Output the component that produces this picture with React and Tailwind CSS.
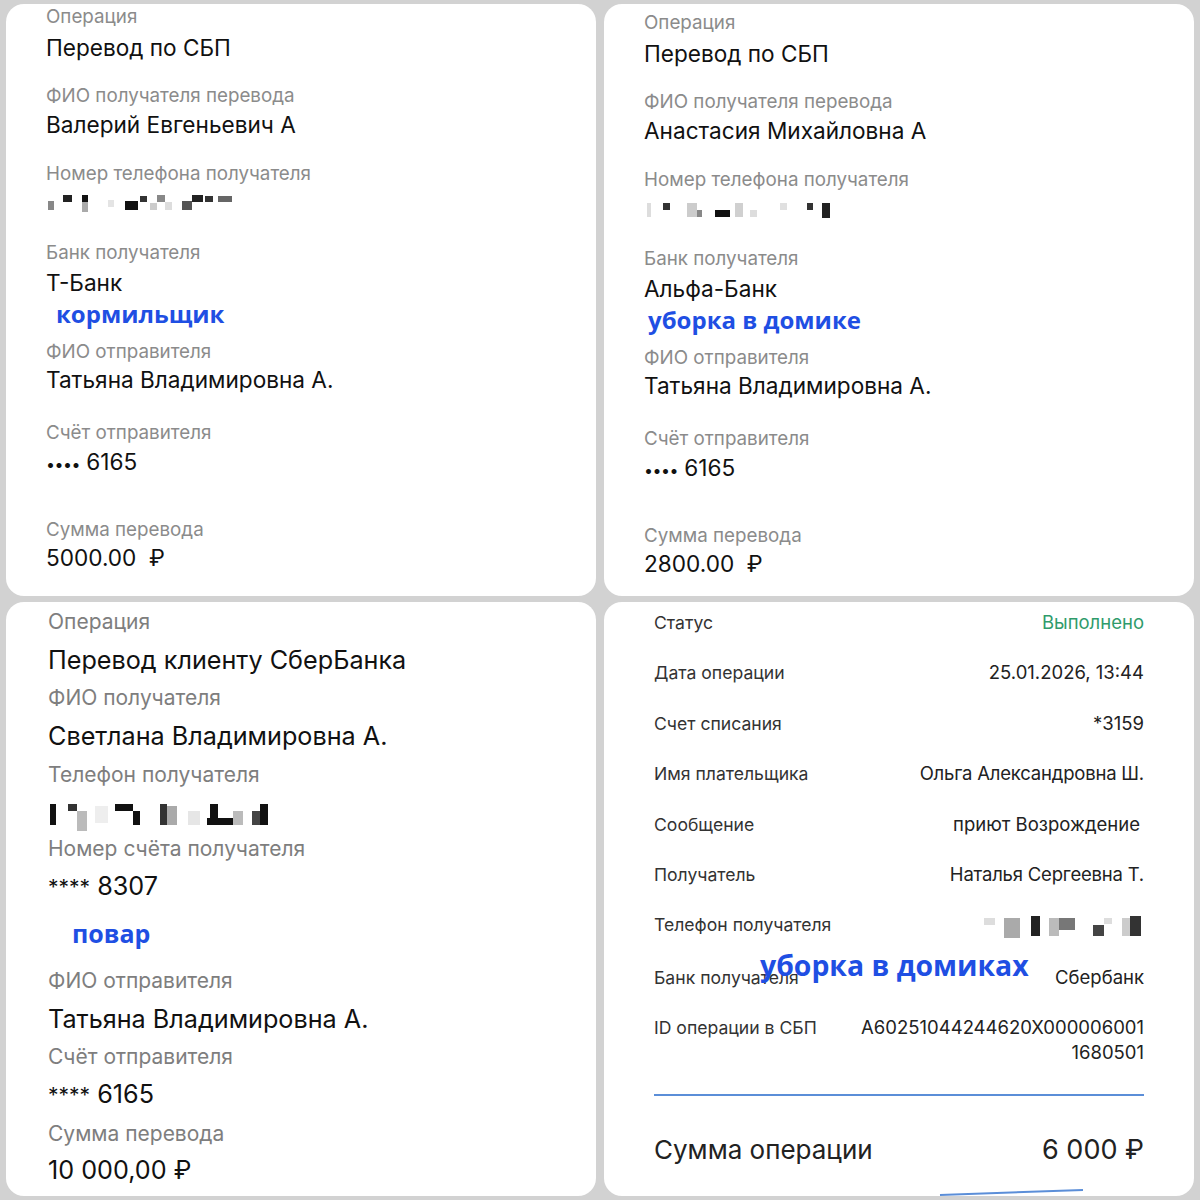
// Коллаж из четырёх чеков о переводах.
const Pix = ({ box, cells }) => {
  const [x0, y0, w, h] = box
  return (
    <svg width={w} height={h} viewBox={`${x0} ${y0} ${w} ${h}`} className="block">
      {cells.map(([x1, y1, x2, y2, c], i) => (
        <rect key={i} x={x1} y={y1} width={x2 - x1} height={y2 - y1} fill={c} />
      ))}
    </svg>
  )
}

const Note = ({ children, className = '' }) => (
  <div
    className={`font-bold text-[#1f4fe3] ${className}`}
    style={{ fontFamily: '"Open Sans", "Noto Sans", sans-serif' }}
  >
    {children}
  </div>
)

const pixA = [
  [48, 197, 54, 206, '#888'],
  [63, 191, 72, 198, '#222'],
  [82, 191, 88, 198, '#111'],
  [82, 198, 88, 208, '#aaa'],
  [108, 196, 114, 203, '#e4e4e4'],
  [125, 197, 138, 206, '#111'],
  [140, 192, 147, 198, '#333'],
  [150, 199, 157, 206, '#ccc'],
  [157, 191, 165, 198, '#888'],
  [165, 198, 172, 206, '#ddd'],
  [182, 197, 192, 206, '#555'],
  [192, 191, 203, 198, '#222'],
  [205, 192, 213, 198, '#333'],
  [218, 192, 232, 198, '#666'],
]

const pixB = [
  [647, 200, 651, 214, '#ddd'],
  [663, 200, 670, 207, '#333'],
  [687, 200, 697, 214, '#ccc'],
  [697, 207, 702, 214, '#888'],
  [715, 207, 730, 214, '#111'],
  [735, 200, 743, 214, '#d0d0d0'],
  [750, 207, 757, 214, '#ddd'],
  [780, 200, 787, 207, '#e0e0e0'],
  [807, 200, 813, 207, '#333'],
  [822, 200, 830, 215, '#222'],
]

const pixC = [
  [50, 803, 56, 824, '#111'],
  [68, 803, 77, 810, '#333'],
  [77, 810, 87, 830, '#bbb'],
  [95, 805, 108, 822, '#eee'],
  [115, 803, 133, 810, '#111'],
  [133, 810, 140, 824, '#111'],
  [160, 803, 167, 824, '#333'],
  [167, 805, 177, 824, '#aaa'],
  [188, 810, 200, 824, '#e6e6e6'],
  [207, 817, 233, 824, '#111'],
  [210, 803, 218, 817, '#111'],
  [233, 810, 243, 824, '#bbb'],
  [252, 810, 260, 824, '#444'],
  [260, 803, 268, 824, '#111'],
]

const pixD = [
  [984, 918, 995, 925, '#ddd'],
  [1004, 918, 1020, 938, '#aaa'],
  [1031, 916, 1040, 936, '#222'],
  [1049, 918, 1059, 936, '#bbb'],
  [1059, 918, 1075, 930, '#777'],
  [1093, 925, 1104, 936, '#444'],
  [1104, 918, 1112, 924, '#ddd'],
  [1122, 918, 1130, 936, '#ccc'],
  [1130, 916, 1141, 936, '#333'],
]

// Карточка СБП (верхний ряд)
function SbpCard({ pt, noteShift, name, bank, note, sum, pix, pixBox }) {
  const lbl = 'text-[18.8px] leading-[22px] text-[#8b8b8b]'
  const val = 'text-[22.6px] leading-[28px] text-[#111]'
  return (
    <div
      className={`rounded-[18px] bg-white pl-[40px] ${pt}`}
      style={{ fontFamily: 'Inter, "Liberation Sans", sans-serif' }}
    >
      <div className={lbl}>Операция</div>
      <div className={`mt-[6px] ${val}`}>Перевод по СБП</div>
      <div className={`mt-[23px] ${lbl}`}>ФИО получателя перевода</div>
      <div className={`mt-[4px] ${val}`}>{name}</div>
      <div className={`mt-[24px] ${lbl}`}>Номер телефона получателя</div>
      <div className="mt-[7px] h-[16px]">
        <Pix box={pixBox} cells={pix} />
      </div>
      <div className={`mt-[34px] ${lbl}`}>Банк получателя</div>
      <div className={`mt-[5px] ${val}`}>{bank}</div>
      <Note className={`mt-[2px] text-[24px] leading-[30px] ${noteShift}`}>{note}</Note>
      <div className={`mt-[12px] ${lbl}`}>ФИО отправителя</div>
      <div className={`mt-[3px] ${val}`}>Татьяна Владимировна А.</div>
      <div className={`mt-[28px] ${lbl}`}>Счёт отправителя</div>
      <div className={`mt-[4px] ${val}`}>
        <span className="text-[16px] tracking-[-0.5px]">••••</span> 6165
      </div>
      <div className={`mt-[41px] ${lbl}`}>Сумма перевода</div>
      <div className={`mt-[3px] whitespace-pre ${val}`}>{sum}</div>
    </div>
  )
}

function SberCard() {
  const lbl = 'text-[21px] leading-[26px] text-[#7e7e7e]'
  const val = 'text-[25.2px] leading-[30px] text-[#111]'
  return (
    <div
      className="rounded-[18px] bg-white pl-[42px] pt-[7px]"
      style={{ fontFamily: 'Inter, "Liberation Sans", sans-serif' }}
    >
      <div className={lbl}>Операция</div>
      <div className={`mt-[10px] ${val}`}>Перевод клиенту СберБанка</div>
      <div className={`mt-[10px] ${lbl}`}>ФИО получателя</div>
      <div className={`mt-[10px] ${val}`}>Светлана Владимировна А.</div>
      <div className={`mt-[11px] ${lbl}`}>Телефон получателя</div>
      <div className="mt-[13px] h-[32px]">
        <Pix box={[48, 800, 225, 32]} cells={pixC} />
      </div>
      <div className={`mt-[3px] ${lbl}`}>Номер счёта получателя</div>
      <div className={`mt-[9px] ${val}`}>
        <span className="text-[21px]">****</span> 8307
      </div>
      <Note className="mt-[15px] ml-[24px] text-[25px] leading-[30px]">повар</Note>
      <div className={`mt-[20px] ${lbl}`}>ФИО отправителя</div>
      <div className={`mt-[10px] ${val}`}>Татьяна Владимировна А.</div>
      <div className={`mt-[10px] ${lbl}`}>Счёт отправителя</div>
      <div className={`mt-[9px] ${val}`}>
        <span className="text-[21px]">****</span> 6165
      </div>
      <div className={`mt-[10px] ${lbl}`}>Сумма перевода</div>
      <div className={`mt-[8px] ${val}`}>10 000,00 ₽</div>
    </div>
  )
}

const Row = ({ label, children, color = 'text-[#222]', extra = '' }) => (
  <div className="flex items-start justify-between">
    <span className="text-[17.6px] leading-[26px] text-[#333]">{label}</span>
    <span className={`text-right text-[18.5px] leading-[25px] ${color} ${extra}`}>{children}</span>
  </div>
)

function ReceiptCard() {
  return (
    <div
      className="relative overflow-hidden rounded-[18px] bg-white pl-[50px] pr-[50px] pt-[8px]"
      style={{ fontFamily: 'Inter, "Liberation Sans", sans-serif' }}
    >
      <div className="flex flex-col gap-[24.4px]">
        <Row label="Статус" color="text-[#2f9b6b]">Выполнено</Row>
        <Row label="Дата операции">25.01.2026, 13:44</Row>
        <Row label="Счет списания">*3159</Row>
        <Row label="Имя плательщика" extra="tracking-[-0.2px]">Ольга Александровна Ш.</Row>
        <Row label="Сообщение" extra="pr-[4px]">приют Возрождение</Row>
        <Row label="Получатель" extra="tracking-[-0.2px]">Наталья Сергеевна Т.</Row>
        <Row label="Телефон получателя">
          <Pix box={[980, 912, 164, 28]} cells={pixD} />
        </Row>
        <Row label="Банк получателя">Сбербанк</Row>
        <Row label="ID операции в СБП">
          A60251044244620X000006001
          <br />
          1680501
        </Row>
      </div>
      <div className="mt-[29px] h-[2px] bg-[#5b8ed8]" />
      <div className="mt-[38px] flex items-center justify-between text-[#222]">
        <span className="text-[26px] leading-[32px]">Сумма операции</span>
        <span className="text-[27px] leading-[32px]">6 000 ₽</span>
      </div>
      <Note className="absolute left-[156px] top-[345px] text-[28.4px] leading-[36px]">уборка в домиках</Note>
      <svg className="absolute bottom-0 left-0" width="592" height="12">
        <line x1="336" y1="11" x2="479" y2="6" stroke="#5b8ed8" strokeWidth="2" />
      </svg>
    </div>
  )
}

export default function App() {
  return (
    <div className="grid h-[1200px] w-[1200px] grid-cols-[590px_590px] grid-rows-[592px_594px] gap-x-[8px] gap-y-[6px] bg-[#d2d2d2] pl-[6px] pt-[4px]">
      <SbpCard
        pt="pt-[2px]"
        noteShift="ml-[10px]"
        name="Валерий Евгеньевич А"
        bank="Т-Банк"
        note="кормильщик"
        sum="5000.00  ₽"
        pix={pixA}
        pixBox={[46, 188, 200, 20]}
      />
      <SbpCard
        pt="pt-[8px]"
        noteShift="ml-[4px]"
        name="Анастасия Михайловна А"
        bank="Альфа-Банк"
        note="уборка в домике"
        sum="2800.00  ₽"
        pix={pixB}
        pixBox={[644, 195, 200, 20]}
      />
      <SberCard />
      <ReceiptCard />
    </div>
  )
}
